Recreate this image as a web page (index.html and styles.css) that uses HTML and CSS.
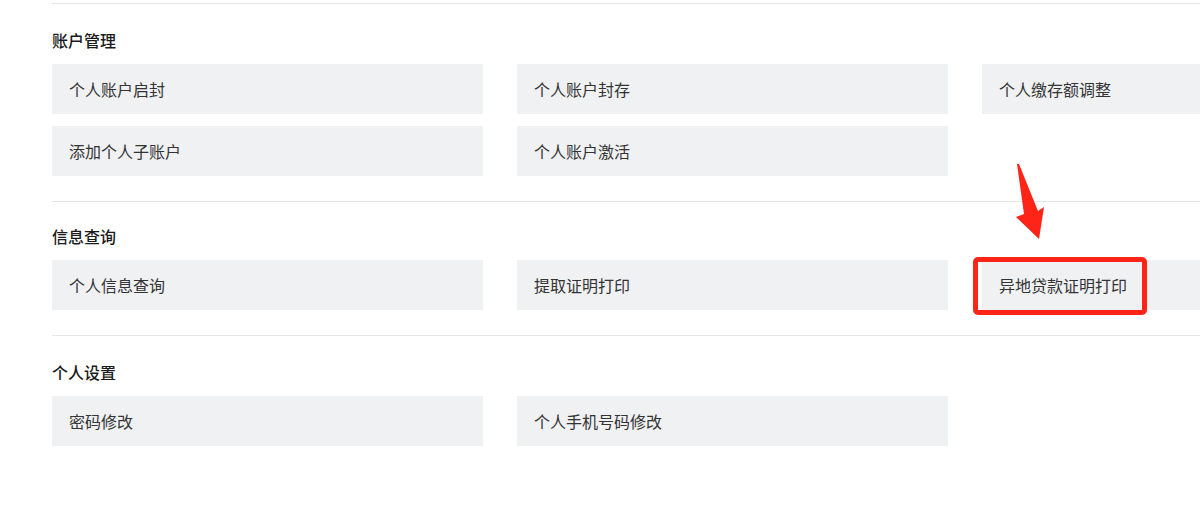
FILE: index.html
```html
<!DOCTYPE html>
<html lang="zh-CN">
<head>
<meta charset="utf-8">
<title>功能列表</title>
<link rel="stylesheet" href="styles.css">
</head>
<body>
<div class="page">
  <section class="group">
    <h2 class="group-title">账户管理</h2>
    <div class="grid">
      <div class="card">个人账户启封</div>
      <div class="card">个人账户封存</div>
      <div class="card">个人缴存额调整</div>
      <div class="card">添加个人子账户</div>
      <div class="card">个人账户激活</div>
    </div>
  </section>
  <section class="group group-tight">
    <h2 class="group-title">信息查询</h2>
    <div class="grid">
      <div class="card">个人信息查询</div>
      <div class="card">提取证明打印</div>
      <div class="card card-marked">异地贷款证明打印
        <span class="highlight"></span>
        <svg class="arrow" width="40" height="85" viewBox="0 0 40 85" aria-hidden="true">
          <polygon points="5,4 7,4 26,51 32,47 27,79 4,57 12,54" fill="#ff2418"/>
        </svg>
      </div>
    </div>
  </section>
  <section class="group">
    <h2 class="group-title">个人设置</h2>
    <div class="grid">
      <div class="card">密码修改</div>
      <div class="card">个人手机号码修改</div>
    </div>
  </section>
</div>
</body>
</html>
```

FILE: styles.css
```css
html, body {
  margin: 0;
  padding: 0;
  background: #ffffff;
  overflow: hidden;
}

body {
  font-family: "Noto Sans CJK SC", "Noto Sans", sans-serif;
  color: #333333;
}

.page {
  padding: 3px 0 0 52px;
  width: 1400px;
}

.group {
  border-top: 1px solid #e6e6e6;
  padding: 24px 0 25px 0;
}

.group-tight {
  padding-top: 22px;
}

.group-title {
  margin: 0 0 12px 0;
  font-size: 16px;
  line-height: 24px;
  font-weight: 500;
  color: #1a1a1a;
}

.grid {
  display: grid;
  grid-template-columns: repeat(3, 431px);
  column-gap: 34px;
  row-gap: 12px;
}

.card {
  position: relative;
  height: 50px;
  display: flex;
  align-items: center;
  padding-left: 17px;
  background: #f0f1f3;
  font-size: 16px;
  color: #333333;
}

.highlight {
  position: absolute;
  left: -9px;
  top: -3px;
  width: 174px;
  height: 58px;
  box-sizing: border-box;
  border: 5px solid #ff2418;
  border-radius: 5px;
}

.arrow {
  position: absolute;
  left: 30px;
  top: -100px;
}
```
